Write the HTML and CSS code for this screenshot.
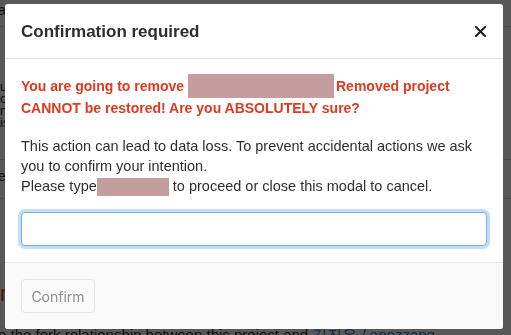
FILE: index.html
```html
<!DOCTYPE html>
<html lang="en">
<head>
<meta charset="utf-8">
<title>Confirmation required</title>
<link rel="stylesheet" href="styles.css">
</head>
<body>
<div class="page">
  <div class="page-row page-first">atures, permissions and visibility settings</div>
  <div class="page-rule"></div>
  <div class="page-block">
    <div class="page-small">use the project's settings to change access</div>
    <div class="page-small">options for users who can see this project</div>
    <div class="page-small">need more help with these settings here</div>
    <div class="page-small">is a fork of another project on the server</div>
  </div>
  <div class="page-rule rule-b"></div>
  <div class="page-row page-mid">ext to project name and description go here</div>
  <div class="page-rule rule-c"></div>
  <div class="page-danger">r</div>
  <div class="page-row page-last">e the fork relationship between this project and <a class="page-link">김진우 / anozzang</a></div>
</div>

<div class="backdrop"></div>

<div class="modal" role="dialog" aria-labelledby="modal-title">
  <div class="modal-header">
    <h4 class="modal-title" id="modal-title">Confirmation required</h4>
    <button class="modal-close" type="button" aria-label="Close">
      <svg width="11" height="11" viewBox="0 0 11 11" aria-hidden="true">
        <path d="M1 1 L10 10 M10 1 L1 10" stroke="#1f1f1f" stroke-width="2" stroke-linecap="square" fill="none"/>
      </svg>
    </button>
  </div>
  <div class="modal-body">
    <p class="warn">You are going to remove <span class="redact redact-name"></span>Removed project CANNOT be restored! Are you ABSOLUTELY sure?</p>
    <p class="info">This action can lead to data loss. To prevent accidental actions we ask you to confirm your intention.<br>Please type<span class="redact redact-code"></span> to proceed or close this modal to cancel.</p>
    <input class="confirm-input" type="text" aria-label="Confirm name">
  </div>
  <div class="modal-footer">
    <button class="btn-confirm" type="button" disabled>Confirm</button>
  </div>
</div>
</body>
</html>
```

FILE: styles.css
```css
html, body {
  margin: 0;
  padding: 0;
}

body {
  width: 511px;
  height: 335px;
  overflow: hidden;
  background: #ffffff;
  font-family: "Liberation Sans", Arial, sans-serif;
  color: #2e2e2e;
}

/* page behind the dialog */
.page {
  margin-left: -2px;
  font-size: 14px;
  color: #2e2e2e;
}

.page-row {
  white-space: nowrap;
  line-height: 16px;
}

.page-first {
  padding-top: 2px;
}

.page-rule {
  height: 1px;
  background: #d8d8d8;
  margin-top: 8px;
}

.page-block {
  padding-top: 54px;
  padding-left: 2px;
}

.page-small {
  font-size: 13px;
  line-height: 12px;
  white-space: nowrap;
}

.rule-b {
  margin-top: 30px;
}

.page-mid {
  margin-top: 8px;
}

.rule-c {
  margin-top: 14px;
}

.page-danger {
  margin-top: 84px;
  padding-left: 2px;
  color: #db3b21;
  font-size: 22px;
  line-height: 22px;
}

.page-last {
  margin-top: 22px;
  font-size: 15px;
}

.page-link {
  color: #1f78d1;
}

/* overlay */
.backdrop {
  position: fixed;
  inset: 0;
  background: rgba(0, 0, 0, 0.655);
}

/* dialog */
.modal {
  position: fixed;
  left: 5px;
  top: 4px;
  width: 498px;
  background: #ffffff;
  border-radius: 3px;
  display: flex;
  flex-direction: column;
  overflow: hidden;
}

.modal-header {
  flex-shrink: 0;
  display: flex;
  align-items: center;
  justify-content: space-between;
  box-sizing: border-box;
  height: 55px;
  padding: 0 16px 0 16px;
  border-bottom: 1px solid #e5e5e5;
}

.modal-title {
  margin: 0;
  font-size: 17px;
  font-weight: 700;
  color: #2e2e2e;
  line-height: 22px;
  padding-top: 1px;
}

.modal-close {
  border: 0;
  background: transparent;
  padding: 0;
  width: 14px;
  height: 14px;
  display: flex;
  align-items: center;
  justify-content: center;
  margin-top: 1px;
}

.modal-body {
  padding: 15px 16px 16px;
  font-size: 14px;
  line-height: 20px;
}

.modal-body p {
  margin: 0 0 16px;
}

.modal-body .warn {
  margin-bottom: 18px;
}

.warn {
  color: #db3b21;
  font-weight: 700;
}

.info {
  color: #2e2e2e;
  font-size: 14.5px;
  line-height: 20px;
}

.redact {
  display: inline-block;
  background: #c49e9e;
}

.redact-name {
  width: 146px;
  height: 24px;
  vertical-align: -7px;
  margin-right: 2px;
}

.redact-code {
  width: 72px;
  height: 18px;
  vertical-align: -5px;
}

.confirm-input {
  display: block;
  box-sizing: border-box;
  width: 100%;
  height: 34px;
  margin: 0;
  border: 1px solid #73afea;
  border-radius: 4px;
  box-shadow: 0 0 0 3px #c4ddf8;
  outline: none;
  font-family: inherit;
  font-size: 14px;
  padding: 6px 10px;
}

.modal-footer {
  background: #fafafa;
  border-top: 1px solid #e5e5e5;
  padding: 16px;
}

.btn-confirm {
  display: block;
  box-sizing: border-box;
  width: 74px;
  height: 34px;
  border: 1px solid #e5e5e5;
  border-radius: 4px;
  background: #fafafa;
  color: #8f8f8f;
  font-family: "Inter", "Liberation Sans", sans-serif;
  font-size: 14px;
  padding: 0;
}
```
